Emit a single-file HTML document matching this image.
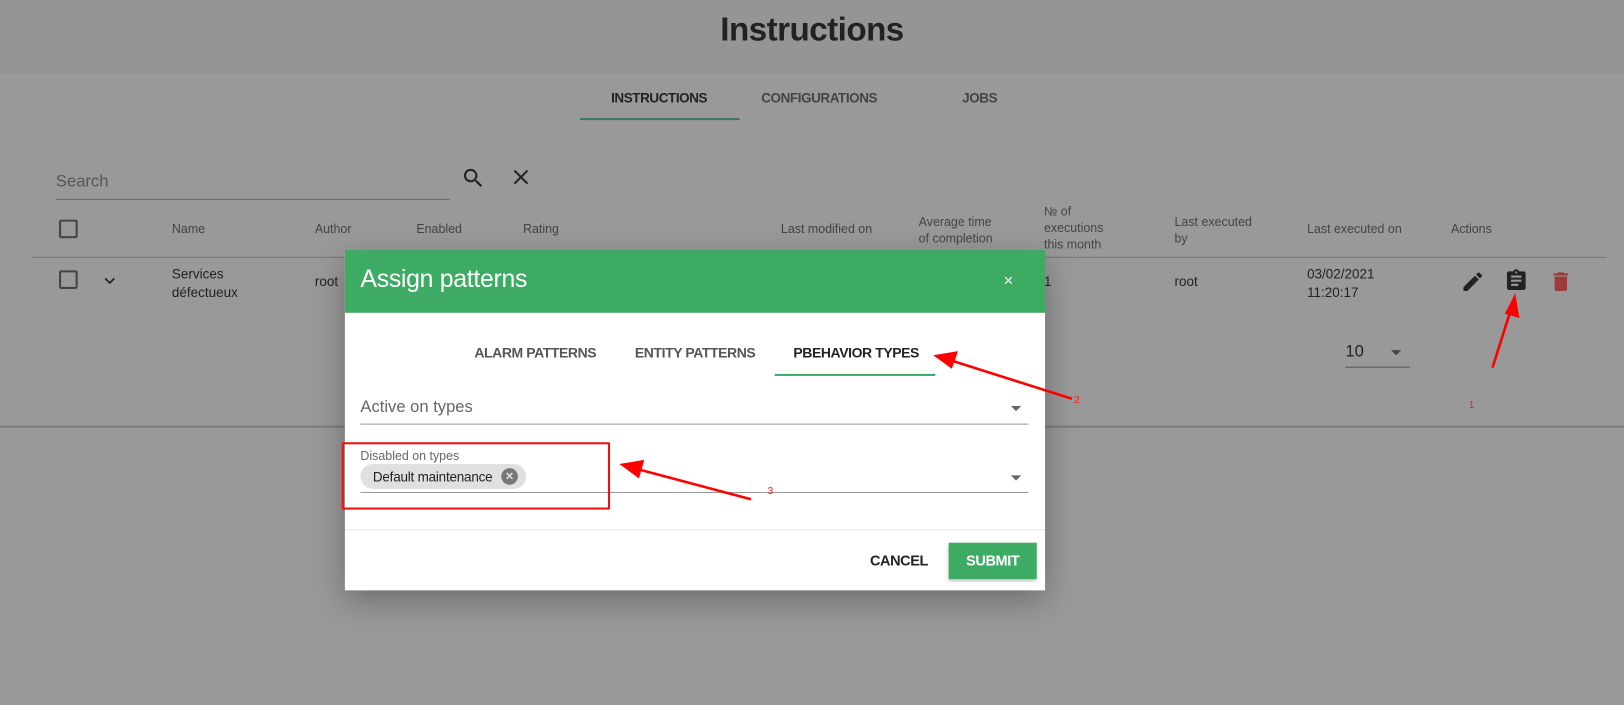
<!DOCTYPE html>
<html><head><meta charset="utf-8"><style>
html,body{margin:0;padding:0;width:1624px;height:705px;overflow:hidden;background:#999;font-family:"Liberation Sans",sans-serif}
#s{position:absolute;left:0;top:0;width:1568px;height:681px;transform:scale(1.035714);transform-origin:0 0;background:#999}
.a{position:absolute;white-space:nowrap}
.h{font-size:12px;color:#444}
.t{font-size:13px;color:#222}
.b{font-weight:bold;letter-spacing:-0.4px}
</style></head><body><div id="s">
<div class="a" style="left:0;top:0;width:1568px;height:69px;background:#959595;border-bottom:1px solid #8c8c8c"></div>
<div class="a" style="left:0;top:10px;width:1568px;text-align:center;font-size:32px;font-weight:bold;color:#222;letter-spacing:-0.5px">Instructions</div>
<div class="a b" style="left:590px;top:87px;font-size:13px;color:#222">INSTRUCTIONS</div>
<div class="a b" style="left:735px;top:87px;font-size:13px;color:#444">CONFIGURATIONS</div>
<div class="a b" style="left:929px;top:87px;font-size:13px;color:#444">JOBS</div>
<div class="a" style="left:560px;top:114px;width:154px;height:2px;background:#3a7a50"></div>
<div class="a" style="left:54px;top:167px;font-size:16px;color:#555">Search</div>
<div class="a" style="left:54px;top:192px;width:380px;height:1px;background:#666"></div>
<svg class="a" style="left:445px;top:160px" width="24" height="24" viewBox="0 0 24 24"><path d="M15.5 14h-.8l-.3-.3A6.5 6.5 0 1 0 9.5 16a6.5 6.5 0 0 0 4.2-1.6l.3.3v.8l5 5 1.5-1.5-5-5zm-6 0A4.5 4.5 0 1 1 14 9.5 4.5 4.5 0 0 1 9.5 14z" fill="#222"/></svg>
<svg class="a" style="left:491px;top:159px" width="24" height="24" viewBox="0 0 24 24"><path d="M19 6.4L17.6 5 12 10.6 6.4 5 5 6.4 10.6 12 5 17.6 6.4 19 12 13.4 17.6 19 19 17.6 13.4 12z" fill="#222"/></svg>
<div class="a" style="left:57px;top:212px;width:14px;height:14px;border:2px solid #444;border-radius:2px"></div>
<div class="a h" style="left:166px;top:214px">Name</div>
<div class="a h" style="left:304px;top:214px">Author</div>
<div class="a h" style="left:402px;top:214px">Enabled</div>
<div class="a h" style="left:505px;top:214px">Rating</div>
<div class="a h" style="left:754px;top:214px">Last modified on</div>
<div class="a h" style="left:887px;top:206px;line-height:16px">Average time<br>of completion</div>
<div class="a h" style="left:1008px;top:196px;line-height:16px">№ of<br>executions<br>this month</div>
<div class="a h" style="left:1134px;top:206px;line-height:16px">Last executed<br>by</div>
<div class="a h" style="left:1262px;top:214px">Last executed on</div>
<div class="a h" style="left:1401px;top:214px">Actions</div>
<div class="a" style="left:31px;top:248px;width:1520px;height:1px;background:#777"></div>
<div class="a" style="left:57px;top:261px;width:14px;height:14px;border:2px solid #444;border-radius:2px"></div>
<svg class="a" style="left:96px;top:261px" width="20" height="20" viewBox="0 0 24 24"><path d="M7.4 8.6L12 13.2l4.6-4.6L18 10l-6 6-6-6z" fill="#222"/></svg>
<div class="a t" style="left:166px;top:256px;line-height:18px">Services<br>défectueux</div>
<div class="a t" style="left:304px;top:264px">root</div>
<div class="a t" style="left:1008px;top:264px">1</div>
<div class="a t" style="left:1134px;top:264px">root</div>
<div class="a t" style="left:1262px;top:256px;line-height:18px">03/02/2021<br>11:20:17</div>
<svg class="a" style="left:1410px;top:260px" width="24" height="24" viewBox="0 0 24 24"><path d="M3 17.2V21h3.8L17.8 9.9l-3.7-3.7zM20.7 7c.4-.4.4-1 0-1.4l-2.3-2.3c-.4-.4-1-.4-1.4 0l-1.8 1.8 3.7 3.7z" fill="#222"/></svg>
<svg class="a" style="left:1452px;top:259px" width="24" height="24" viewBox="0 0 24 24"><path d="M19 3h-4.2C14.4 1.8 13.3 1 12 1s-2.4.8-2.8 2H5c-1.1 0-2 .9-2 2v14c0 1.1.9 2 2 2h14c1.1 0 2-.9 2-2V5c0-1.1-.9-2-2-2zm-7 0c.6 0 1 .4 1 1s-.4 1-1 1-1-.4-1-1 .4-1 1-1zm2 14H7v-2h7zm3-4H7v-2h10zm0-4H7V7h10z" fill="#222"/></svg>
<svg class="a" style="left:1495px;top:260px" width="24" height="24" viewBox="0 0 24 24"><path d="M6 19c0 1.1.9 2 2 2h8c1.1 0 2-.9 2-2V7H6zM19 4h-3.5l-1-1h-5l-1 1H5v2h14z" fill="#9c3b3b"/></svg>
<div class="a" style="left:1299px;top:331px;font-size:16px;color:#222">10</div>
<div class="a" style="left:1343px;top:338px;border-left:5px solid transparent;border-right:5px solid transparent;border-top:5px solid #444"></div>
<div class="a" style="left:1299px;top:354px;width:62px;height:1px;background:#555"></div>
<div class="a" style="left:0;top:411px;width:1568px;height:2px;background:#7d7d7d"></div>
<div class="a" style="left:1418px;top:386px;font-size:10px;color:#e22">1</div>
<svg class="a" style="left:0;top:0" width="1568" height="681"><line x1="1441" y1="355" x2="1461" y2="292" stroke="#f00" stroke-width="2.5"/><polygon points="1463,283 1467,307 1453,303" fill="#f00"/></svg>
<div class="a" style="left:333px;top:241px;width:676px;height:329px;background:#fff;box-shadow:0 10px 30px rgba(0,0,0,.3)"></div>
<div class="a" style="left:333px;top:241px;width:676px;height:61px;background:#3dab63"></div>
<div class="a" style="left:348px;top:256px;font-size:24px;color:#fff;letter-spacing:-0.3px">Assign patterns</div>
<div class="a" style="left:969px;top:263px;font-size:16px;color:#fff">×</div>
<div class="a b" style="left:458px;top:333px;font-size:13.5px;color:#555">ALARM PATTERNS</div>
<div class="a b" style="left:613px;top:333px;font-size:13.5px;color:#555">ENTITY PATTERNS</div>
<div class="a b" style="left:766px;top:333px;font-size:13.5px;color:#222">PBEHAVIOR TYPES</div>
<div class="a" style="left:748px;top:361px;width:155px;height:2px;background:#3dab63"></div>
<div class="a" style="left:348px;top:385px;font-size:16px;color:#666">Active on types</div>
<div class="a" style="left:976px;top:392px;border-left:5px solid transparent;border-right:5px solid transparent;border-top:5px solid #666"></div>
<div class="a" style="left:348px;top:409px;width:645px;height:1px;background:#999"></div>
<div class="a" style="left:348px;top:433px;font-size:12px;color:#666">Disabled on types</div>
<div class="a" style="left:348px;top:448px;width:160px;height:24px;border-radius:12px;background:#e0e0e0"></div>
<div class="a" style="left:360px;top:453px;font-size:13px;color:#222;letter-spacing:-0.2px">Default maintenance</div>
<div class="a" style="left:484px;top:452px;width:16px;height:16px;border-radius:50%;background:#777;color:#e0e0e0;font-size:13px;line-height:16px;text-align:center;font-weight:bold">×</div>
<div class="a" style="left:976px;top:459px;border-left:5px solid transparent;border-right:5px solid transparent;border-top:5px solid #666"></div>
<div class="a" style="left:348px;top:475px;width:645px;height:1px;background:#999"></div>
<div class="a" style="left:333px;top:511px;width:676px;height:1px;background:#e4e4e4"></div>
<div class="a b" style="left:840px;top:533px;font-size:14px;color:#222">CANCEL</div>
<div class="a b" style="left:916px;top:524px;width:85px;height:35px;background:#3dab63;box-shadow:0 2px 3px rgba(0,0,0,.3);color:#fff;font-size:14px;text-align:center;line-height:35px">SUBMIT</div>
<div class="a" style="left:330px;top:427px;width:255px;height:61px;border:2px solid #e11"></div>
<div class="a" style="left:1037px;top:381px;font-size:10px;color:#e22">2</div>
<div class="a" style="left:741px;top:469px;font-size:10px;color:#e22">3</div>
<svg class="a" style="left:0;top:0" width="1568" height="681"><line x1="1035" y1="385" x2="915" y2="347" stroke="#f00" stroke-width="2.5"/><polygon points="901,343 925,339 919,356" fill="#f00"/><line x1="725" y1="482" x2="612" y2="452" stroke="#f00" stroke-width="2.5"/><polygon points="598,448 622,444 617,462" fill="#f00"/></svg>
</div></body></html>
